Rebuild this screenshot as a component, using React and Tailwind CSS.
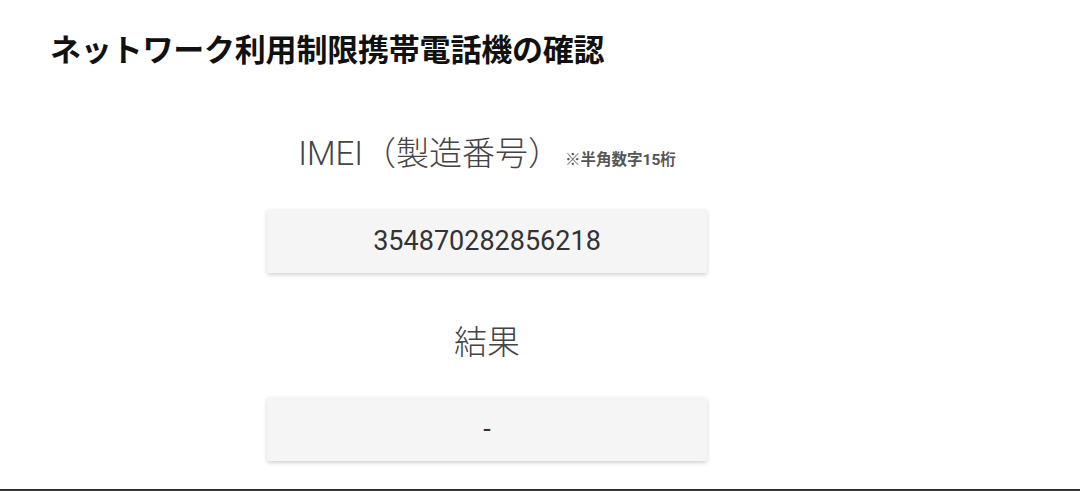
export default function App() {
  const font = { fontFamily: 'Roboto, "Noto Sans CJK JP", sans-serif' };
  return (
    <div className="w-[1080px] h-[491px] bg-white flex flex-col overflow-hidden" style={font}>
      <h1 className="pt-[31px] pl-[50px] h-[71px] text-[31px] leading-[40px] font-bold text-[#111] tracking-[-0.2px]">
        ネットワーク利用制限携帯電話機の確認
      </h1>
      <div className="ml-[267px] w-[440px] flex flex-col">
        <div className="mt-[63px] h-[40px] flex items-baseline justify-center gap-[4px]">
          <span className="text-[33px] leading-[40px] font-light text-[#444]">IMEI（製造番号）</span>
          <span className="text-[15.5px] font-bold text-[#555]">※半角数字15桁</span>
        </div>
        <div className="mt-[35px] h-[64px] bg-[#f5f5f5] shadow-[0_2px_4px_rgba(0,0,0,0.18)] rounded-[2px] flex items-center justify-center text-[27px] text-[#333]">
          354870282856218
        </div>
        <div className="mt-[50px] h-[40px] text-center text-[33px] leading-[40px] font-light text-[#444]">
          結果
        </div>
        <div className="mt-[34px] h-[64px] bg-[#f5f5f5] shadow-[0_2px_4px_rgba(0,0,0,0.18)] rounded-[2px] flex items-center justify-center text-[27px] text-[#333]">
          -
        </div>
      </div>
      <div className="mt-auto h-[2px] bg-[#333]" />
    </div>
  );
}
